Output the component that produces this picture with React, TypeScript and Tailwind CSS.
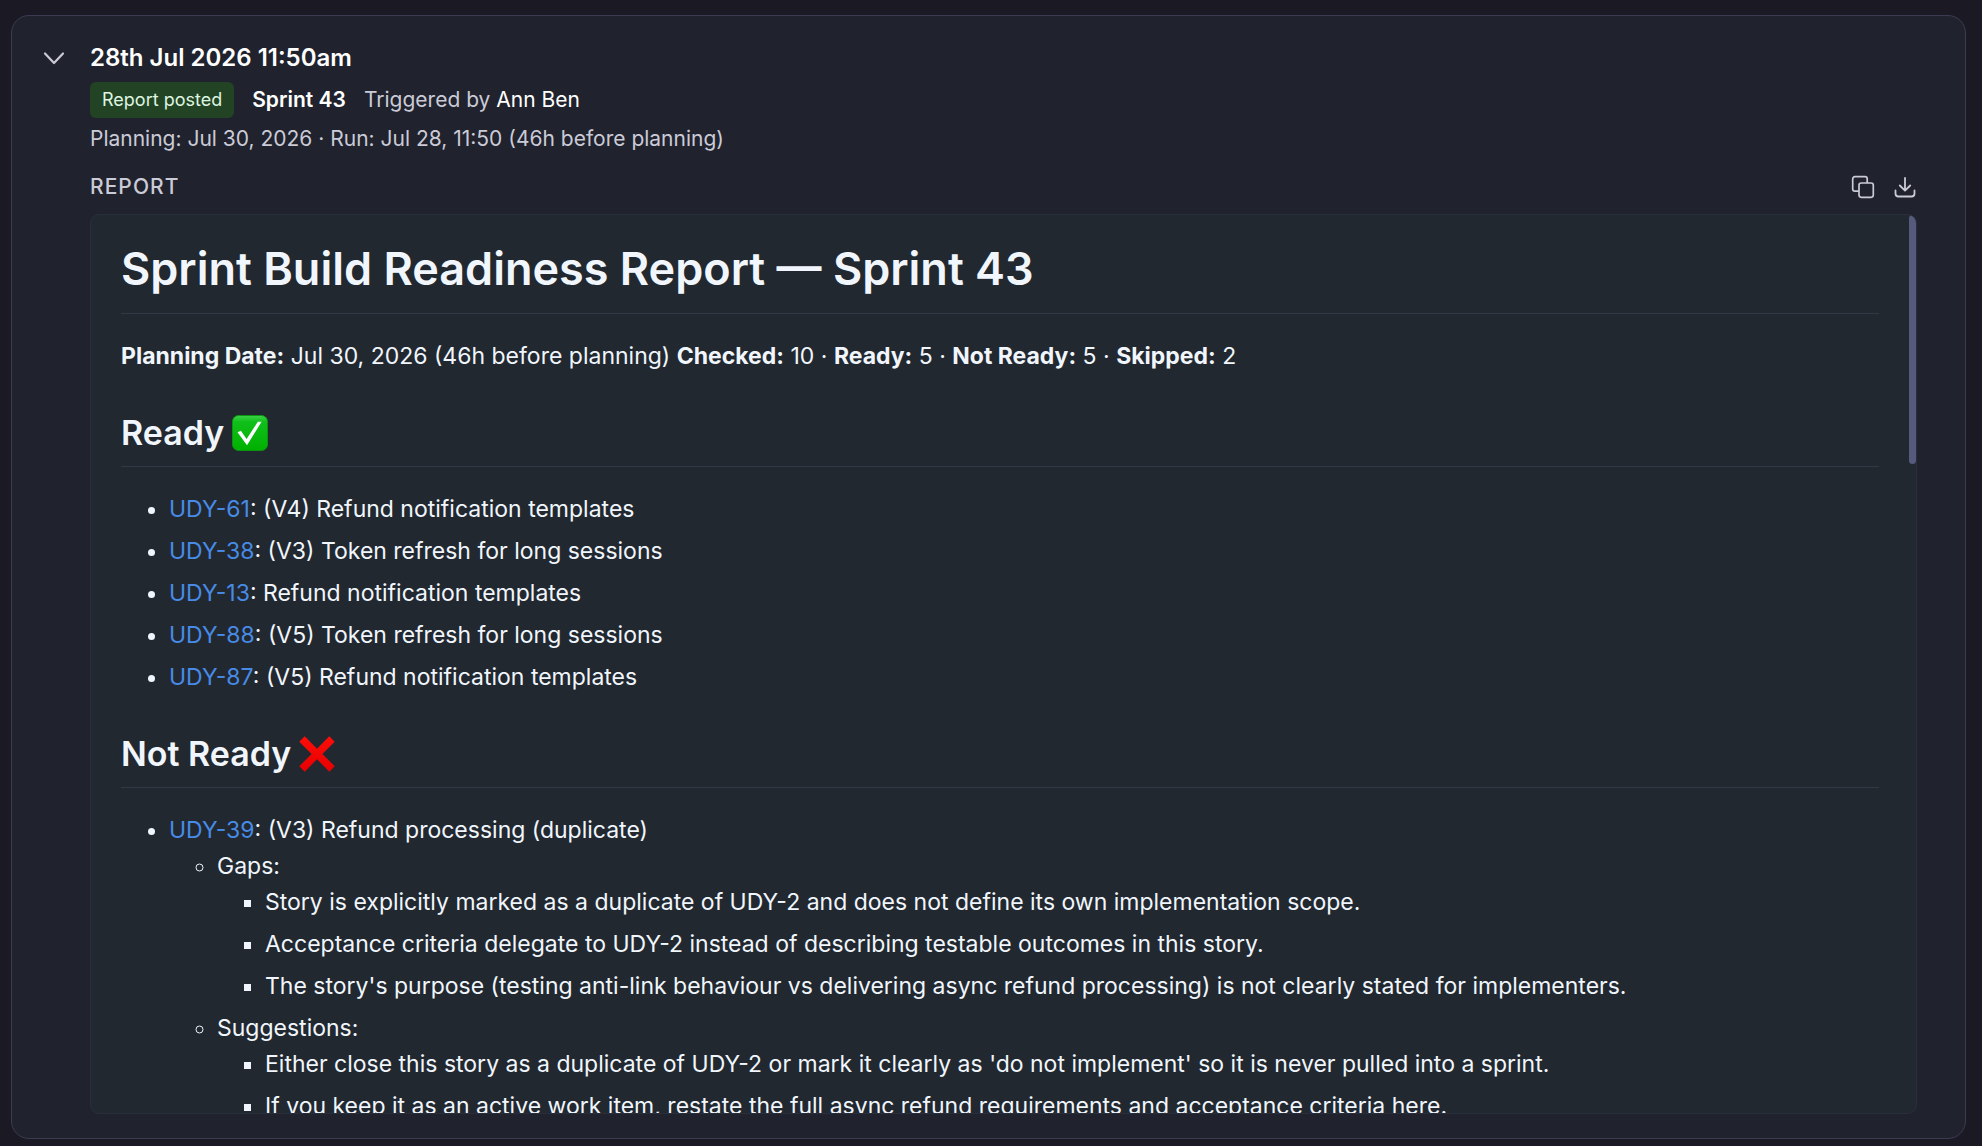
import type { ReactNode } from "react";

type Story = { id: string; title: string };

const ready: Story[] = [
  { id: "UDY-61", title: "(V4) Refund notification templates" },
  { id: "UDY-38", title: "(V3) Token refresh for long sessions" },
  { id: "UDY-13", title: "Refund notification templates" },
  { id: "UDY-88", title: "(V5) Token refresh for long sessions" },
  { id: "UDY-87", title: "(V5) Refund notification templates" },
];

const gaps = [
  "Story is explicitly marked as a duplicate of UDY-2 and does not define its own implementation scope.",
  "Acceptance criteria delegate to UDY-2 instead of describing testable outcomes in this story.",
  "The story's purpose (testing anti-link behaviour vs delivering async refund processing) is not clearly stated for implementers.",
];

const suggestions = [
  "Either close this story as a duplicate of UDY-2 or mark it clearly as 'do not implement' so it is never pulled into a sprint.",
  "If you keep it as an active work item, restate the full async refund requirements and acceptance criteria here.",
];

function ChevronDown() {
  return (
    <svg viewBox="0 0 24 24" className="size-6" fill="none" stroke="currentColor" strokeWidth="2.2" strokeLinecap="round" strokeLinejoin="round" aria-hidden="true">
      <path d="M3 7.5l9 9.5 9-9.5" />
    </svg>
  );
}

function CopyIcon() {
  return (
    <svg viewBox="0 0 24 24" className="size-6" fill="none" stroke="currentColor" strokeWidth="1.7" strokeLinejoin="round" aria-hidden="true">
      <path d="M8 16.200H3.900A2.200 2.200 0 0 1 1.700 14V3.900A2.200 2.200 0 0 1 3.900 1.700H14A2.200 2.200 0 0 1 16.200 3.900V8" />
      <rect x="8" y="8" width="14.300" height="14.300" rx="2.200" />
    </svg>
  );
}

function DownloadIcon() {
  return (
    <svg viewBox="0 0 24 24" className="size-6" fill="none" stroke="currentColor" strokeWidth="1.8" strokeLinecap="round" strokeLinejoin="round" aria-hidden="true">
      <path d="M12 3v12.500M6.800 10.500L12 15.700l5.200-5.200" />
      <path d="M2.500 15.500v3a3 3 0 0 0 3 3h13a3 3 0 0 0 3-3v-3" />
    </svg>
  );
}

function CheckMark() {
  return (
    <svg viewBox="0 0 36 36" className="size-9" role="img" aria-label="Ready">
      <defs>
        <linearGradient id="checkFill" x1="0" y1="0" x2="0" y2="1">
          <stop offset="0" stopColor="#3fd24a" />
          <stop offset="0.180" stopColor="#10c01a" />
          <stop offset="1" stopColor="#00b000" />
        </linearGradient>
      </defs>
      <rect x="0.500" y="0.500" width="35" height="35" rx="6" fill="url(#checkFill)" stroke="#0b9412" strokeWidth="1" />
      <path d="M5.500 17.200l3.400-1.400 5.700 8.200L25.800 6.800h3.800L15 30.200z" fill="#fff" />
    </svg>
  );
}

function CrossMark() {
  return (
    <svg viewBox="0 0 36 36" className="size-9" role="img" aria-label="Not ready">
      <defs>
        <linearGradient id="crossFill" x1="0" y1="0" x2="0" y2="1">
          <stop offset="0" stopColor="#ff0d08" />
          <stop offset="1" stopColor="#e60000" />
        </linearGradient>
      </defs>
      <path d="M0.300 5.700L5.700 0.300 18 12.800 30.300 0.300 35.700 5.700 23.400 18 35.700 30.300 30.300 35.700 18 23.200 5.700 35.700 0.300 30.300 12.600 18z" fill="url(#crossFill)" />
    </svg>
  );
}

function SectionHeading({ children }: { children: ReactNode }) {
  return (
    <h2 className="mt-9 mb-6 flex items-center gap-2 border-b border-[#313847] pb-[11px] text-[34px] leading-[45px] font-semibold">
      {children}
    </h2>
  );
}

function StoryLink({ id }: { id: string }) {
  return (
    <a href={`#${id}`} className="text-[#478be6] hover:underline">
      {id}
    </a>
  );
}

function Notes({ items }: { items: string[] }) {
  return (
    <ul className="list-[square] space-y-1.5 pl-12">
      {items.map((t) => (
        <li key={t}>{t}</li>
      ))}
    </ul>
  );
}

export default function App() {
  return (
    <div className="flex h-screen bg-[#1b1a24] pt-[15px] pr-4 pb-[7px] pl-[11px] font-['Inter',sans-serif] text-[#cbcbd8]">
      <article className="flex min-w-0 flex-1 flex-col rounded-[18px] border border-[#3b3c51] bg-[#20222d] pt-6 pr-12 pb-6 pl-[30px]">
        <header className="flex items-start gap-6">
          <button type="button" aria-label="Collapse run" aria-expanded="true" className="flex h-9 w-6 items-center justify-center">
            <ChevronDown />
          </button>
          <div className="min-w-0 flex-1 text-[21px] leading-[30px]">
            <h1 className="text-[24px] leading-9 font-semibold text-white">28th Jul 2026 11:50am</h1>
            <div className="mt-1.5 flex items-center gap-[18px]">
              <span className="rounded-md bg-[#224424] px-3 text-[18px] leading-9 text-[#dff5e0]">Report posted</span>
              <span className="font-semibold text-white">Sprint 43</span>
              <span>
                Triggered by <span className="text-white">Ann Ben</span>
              </span>
            </div>
            <p className="mt-1.5">Planning: Jul 30, 2026 · Run: Jul 28, 11:50 (46h before planning)</p>
          </div>
        </header>

        <section className="mt-3 flex min-h-0 flex-1 flex-col pl-12">
          <div className="mb-1.5 flex h-[42px] items-center justify-between">
            <h2 className="text-[21px] leading-[30px] font-medium tracking-wider uppercase">Report</h2>
            <div className="flex gap-[18px]">
              <button type="button" aria-label="Copy report"><CopyIcon /></button>
              <button type="button" aria-label="Download report"><DownloadIcon /></button>
            </div>
          </div>

          <div className="flex min-h-0 flex-1 overflow-hidden rounded-[9px] border border-[#2a2d3b] bg-[#222830]">
            <div className="min-w-0 flex-1 overflow-y-auto px-[30px] py-6 text-[23px] leading-9 text-[#f0f6fc] [scrollbar-width:none]">
              <h1 className="mb-6 border-b border-[#313847] pb-3.5 text-[45px] leading-[60px] font-semibold">
                Sprint Build Readiness Report — Sprint 43
              </h1>
              <p>
                <strong className="font-bold">Planning Date:</strong> Jul 30, 2026 (46h before planning){" "}
                <strong className="font-bold">Checked:</strong> 10 · <strong className="font-bold">Ready:</strong> 5 ·{" "}
                <strong className="font-bold">Not Ready:</strong> 5 · <strong className="font-bold">Skipped:</strong> 2
              </p>

              <SectionHeading>
                Ready <CheckMark />
              </SectionHeading>
              <ul className="list-disc space-y-1.5 pl-12">
                {ready.map((s) => (
                  <li key={s.id}>
                    <StoryLink id={s.id} />: {s.title}
                  </li>
                ))}
              </ul>

              <SectionHeading>
                Not Ready <CrossMark />
              </SectionHeading>
              <ul className="list-disc pl-12">
                <li>
                  <StoryLink id="UDY-39" />: (V3) Refund processing (duplicate)
                  <ul className="list-[circle] space-y-1.5 pl-12">
                    <li>
                      Gaps:
                      <Notes items={gaps} />
                    </li>
                    <li>
                      Suggestions:
                      <Notes items={suggestions} />
                    </li>
                  </ul>
                </li>
              </ul>
            </div>
            <div className="w-[7px] shrink-0" aria-hidden="true">
              <div className="h-5/18 rounded-full bg-[#565a7c]" />
            </div>
          </div>
        </section>
      </article>
    </div>
  );
}
